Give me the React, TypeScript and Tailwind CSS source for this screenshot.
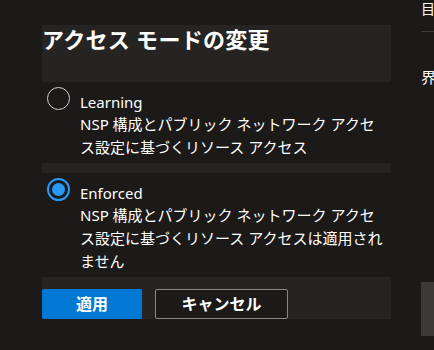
import React, { useState } from 'react';

type Mode = 'learning' | 'enforced';

const options: { id: Mode; label: string; lines: string[] }[] = [
  {
    id: 'learning',
    label: 'Learning',
    lines: ['NSP 構成とパブリック ネットワーク アクセ', 'ス設定に基づくリソース アクセス'],
  },
  {
    id: 'enforced',
    label: 'Enforced',
    lines: [
      'NSP 構成とパブリック ネットワーク アクセ',
      'ス設定に基づくリソース アクセスは適用され',
      'ません',
    ],
  },
];

function Radio({ checked }: { checked: boolean }) {
  if (checked) {
    return (
      <div className="w-[23px] h-[23px] rounded-full border-2 border-[#2899f5] flex items-center justify-center shrink-0">
        <div className="w-[13px] h-[13px] rounded-full bg-[#2899f5]" />
      </div>
    );
  }
  return <div className="w-[23px] h-[23px] rounded-full border-[1.5px] border-[#d2d0ce] shrink-0" />;
}

export default function App() {
  const [mode, setMode] = useState<Mode>('enforced');

  return (
    <div className="w-[434px] h-[350px] bg-[#1b1a19] flex overflow-hidden text-white font-['Noto_Sans','Noto_Sans_CJK_JP',sans-serif]">
      <div className="w-[421px] shrink-0 pl-[42px] pr-[30px] pt-[25px] flex flex-col">
        <div className="h-[57px] bg-[#252423]">
          <h2 className="text-[22px] leading-[28px] font-bold tracking-[0.3px]">アクセス モードの変更</h2>
        </div>

        {options.map((opt, i) => (
          <React.Fragment key={opt.id}>
            {i > 0 && <div className="h-[10px] bg-[#252423]" />}
            <div
              onClick={() => setMode(opt.id)}
              className={`flex gap-[10px] pl-[5px] pt-[5px] cursor-pointer ${i === 0 ? 'mb-[4px]' : 'mb-[4px]'}`}
            >
              <Radio checked={mode === opt.id} />
              <div className="pt-[4px]">
                <div className="text-[15px] leading-[22px]">{opt.label}</div>
                <p className="text-[15px] leading-[23px]">
                  {opt.lines.map((line, j) => (
                    <React.Fragment key={j}>
                      {line}
                      {j < opt.lines.length - 1 && <br />}
                    </React.Fragment>
                  ))}
                </p>
              </div>
            </div>
          </React.Fragment>
        ))}

        <div className="bg-[#252423] pt-[12px] flex gap-[13px]">
          <button className="w-[100px] h-[30px] rounded-[2px] bg-[#0078d4] text-[16px] font-bold leading-none">
            適用
          </button>
          <button className="w-[133px] h-[30px] rounded-[2px] border border-[#8a8886] bg-[#1b1a19] text-[16px] font-bold leading-none">
            キャンセル
          </button>
        </div>
      </div>

      <div className="flex-1 overflow-hidden flex flex-col">
        <div className="text-[14px] leading-[18px] whitespace-nowrap">目の</div>
        <div className="mt-[13px] h-px bg-[#3b3a39]" />
        <div className="mt-[35px] text-[15px] leading-[20px] whitespace-nowrap">界</div>
        <div className="mt-[195px] h-[54px] bg-[#3b3a39]" />
      </div>
    </div>
  );
}
